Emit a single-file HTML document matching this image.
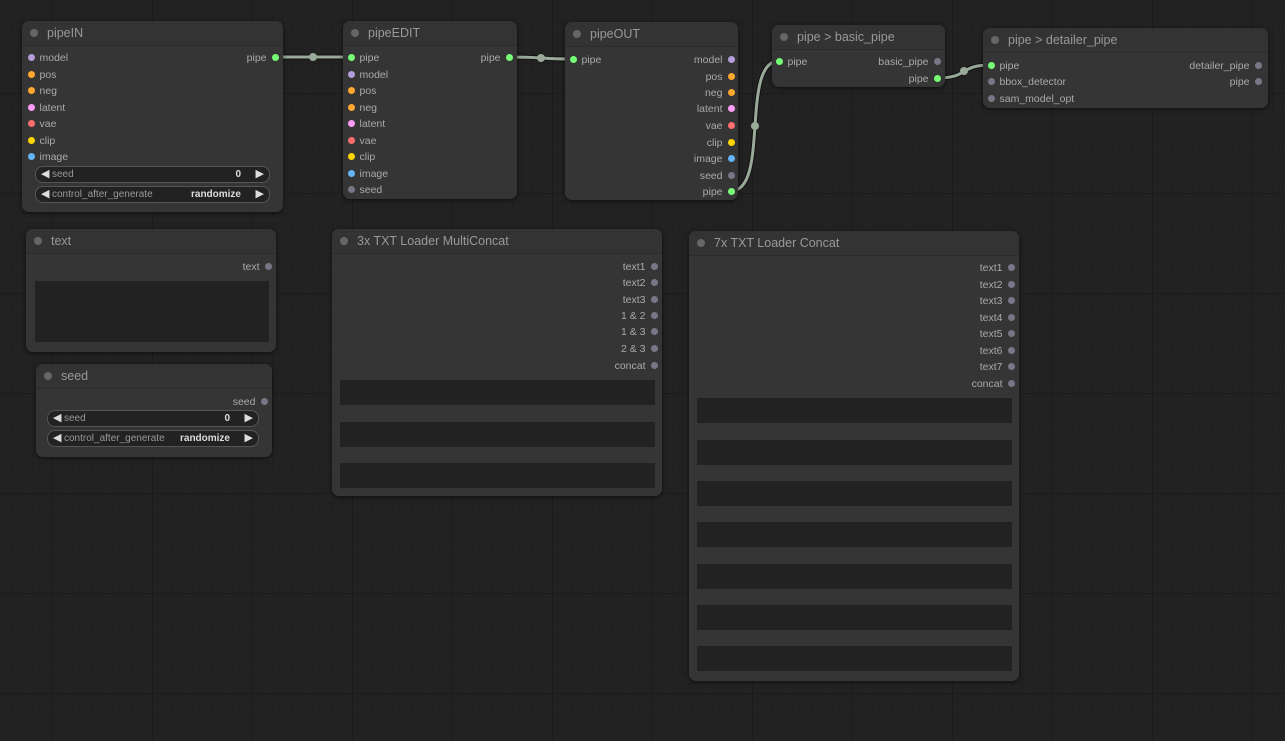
<!DOCTYPE html>
<html><head><style>
body{margin:0;width:1285px;height:741px;overflow:hidden;font-family:"Liberation Sans",sans-serif;
background-color:#222;
background-image:linear-gradient(#1b1b1b 1px,transparent 1px),linear-gradient(90deg,#1b1b1b 1px,transparent 1px),linear-gradient(#1f1f1f 1px,transparent 1px),linear-gradient(90deg,#1f1f1f 1px,transparent 1px);
background-size:100px 100px,100px 100px,10px 10px,10px 10px;background-position:-48px -7px;position:relative}
.n{position:absolute;background:#353535;border-radius:7px;box-shadow:0 1px 4px rgba(0,0,0,.6)}
.n .t{height:24px;border-bottom:1px solid #2c2c2c;background:#333;border-radius:7px 7px 0 0;color:#999;font-size:12.5px;line-height:24px;padding-left:25px;position:relative}
.n .t:before{content:"";position:absolute;left:8px;top:8px;width:8px;height:8px;border-radius:50%;background:#666}
.i,.o{position:absolute;height:14px;line-height:16px;font-size:10.5px;color:#aaa;white-space:nowrap}
.i{padding-left:12px}.o{padding-right:12px;text-align:right}
.i b,.o b{position:absolute;top:3.5px;width:7px;height:7px;border-radius:50%;background:#778}
.i b{left:0}.o b{right:0}
.w{position:absolute;height:15px;border:1px solid #555;border-radius:8px;background:#222;font-size:10px;line-height:16px;color:#999}
.w .l{position:absolute;left:5px;color:#ddd;font-size:11px;line-height:15px}.w .r{position:absolute;right:5px;color:#ddd;font-size:11px;line-height:15px}
.w .k{position:absolute;left:16px}.w .v{position:absolute;right:28px;color:#ddd;font-weight:bold}
.ta{position:absolute;background:#222}
.g{background:#7f7!important}
</style></head><body>
<svg width="1285" height="741" style="position:absolute;left:0;top:0">
<g fill="none" stroke-linecap="round">
<g stroke="#111" stroke-width="5">
<path d="M275 57 C310 57 316 57 351 57"/><path d="M509 57 C545 57 537 59 573 59"/><path d="M731 191 C770 191 740 61 779 61"/><path d="M937 78 C970 78 958 65 991 65"/></g>
<g stroke="#9aaa98" stroke-width="3">
<path d="M275 57 C310 57 316 57 351 57"/><path d="M509 57 C545 57 537 59 573 59"/><path d="M731 191 C770 191 740 61 779 61"/><path d="M937 78 C970 78 958 65 991 65"/></g></g>
<g fill="#9aaa98"><circle cx="313" cy="57" r="4"/><circle cx="541" cy="58" r="4"/><circle cx="755" cy="126" r="4"/><circle cx="964" cy="71" r="4"/></g>
</svg>

<div class="n" style="left:22px;top:21px;width:261px;height:191px"><div class="t">pipeIN</div></div>
<div class="n" style="left:343px;top:21px;width:174px;height:178px"><div class="t">pipeEDIT</div></div>
<div class="n" style="left:565px;top:22px;width:173px;height:178px"><div class="t">pipeOUT</div></div>
<div class="n" style="left:772px;top:25px;width:173px;height:62px"><div class="t">pipe &gt; basic_pipe</div></div>
<div class="n" style="left:983px;top:28px;width:285px;height:80px"><div class="t">pipe &gt; detailer_pipe</div></div>
<div class="n" style="left:26px;top:229px;width:250px;height:123px"><div class="t">text</div></div>
<div class="n" style="left:36px;top:364px;width:236px;height:93px"><div class="t">seed</div></div>
<div class="n" style="left:332px;top:229px;width:330px;height:267px"><div class="t">3x TXT Loader MultiConcat</div></div>
<div class="n" style="left:689px;top:231px;width:330px;height:450px"><div class="t">7x TXT Loader Concat</div></div>

<!-- pipeIN -->
<div class="i" style="left:27.5px;top:50px"><b style="background:#b39ddb"></b>model</div>
<div class="i" style="left:27.5px;top:67px"><b style="background:#ffa931"></b>pos</div>
<div class="i" style="left:27.5px;top:83px"><b style="background:#ffa931"></b>neg</div>
<div class="i" style="left:27.5px;top:100px"><b style="background:#ff9cf9"></b>latent</div>
<div class="i" style="left:27.5px;top:116px"><b style="background:#ff6e6e"></b>vae</div>
<div class="i" style="left:27.5px;top:133px"><b style="background:#ffd500"></b>clip</div>
<div class="i" style="left:27.5px;top:149px"><b style="background:#64b5f6"></b>image</div>
<div class="o" style="right:1006.5px;top:50px"><b class="g"></b>pipe</div>
<div class="w" style="left:35px;top:166px;width:233px"><span class="l">◀</span><span class="k">seed</span><span class="v">0</span><span class="r">▶</span></div>
<div class="w" style="left:35px;top:186px;width:233px"><span class="l">◀</span><span class="k">control_after_generate</span><span class="v">randomize</span><span class="r">▶</span></div>

<!-- pipeEDIT -->
<div class="i" style="left:347.5px;top:50px"><b class="g"></b>pipe</div>
<div class="i" style="left:347.5px;top:67px"><b style="background:#b39ddb"></b>model</div>
<div class="i" style="left:347.5px;top:83px"><b style="background:#ffa931"></b>pos</div>
<div class="i" style="left:347.5px;top:100px"><b style="background:#ffa931"></b>neg</div>
<div class="i" style="left:347.5px;top:116px"><b style="background:#ff9cf9"></b>latent</div>
<div class="i" style="left:347.5px;top:133px"><b style="background:#ff6e6e"></b>vae</div>
<div class="i" style="left:347.5px;top:149px"><b style="background:#ffd500"></b>clip</div>
<div class="i" style="left:347.5px;top:166px"><b style="background:#64b5f6"></b>image</div>
<div class="i" style="left:347.5px;top:182px"><b></b>seed</div>
<div class="o" style="right:772.5px;top:50px"><b class="g"></b>pipe</div>

<!-- pipeOUT -->
<div class="i" style="left:569.5px;top:52px"><b class="g"></b>pipe</div>
<div class="o" style="right:550.5px;top:52px"><b style="background:#b39ddb"></b>model</div>
<div class="o" style="right:550.5px;top:69px"><b style="background:#ffa931"></b>pos</div>
<div class="o" style="right:550.5px;top:85px"><b style="background:#ffa931"></b>neg</div>
<div class="o" style="right:550.5px;top:101px"><b style="background:#ff9cf9"></b>latent</div>
<div class="o" style="right:550.5px;top:118px"><b style="background:#ff6e6e"></b>vae</div>
<div class="o" style="right:550.5px;top:135px"><b style="background:#ffd500"></b>clip</div>
<div class="o" style="right:550.5px;top:151px"><b style="background:#64b5f6"></b>image</div>
<div class="o" style="right:550.5px;top:168px"><b></b>seed</div>
<div class="o" style="right:550.5px;top:184px"><b class="g"></b>pipe</div>

<!-- basic -->
<div class="i" style="left:775.5px;top:54px"><b class="g"></b>pipe</div>
<div class="o" style="right:344.5px;top:54px"><b></b>basic_pipe</div>
<div class="o" style="right:344.5px;top:71px"><b class="g"></b>pipe</div>

<!-- detailer -->
<div class="i" style="left:987.5px;top:58px"><b class="g"></b>pipe</div>
<div class="i" style="left:987.5px;top:74px"><b></b>bbox_detector</div>
<div class="i" style="left:987.5px;top:91px"><b></b>sam_model_opt</div>
<div class="o" style="right:23.5px;top:58px"><b></b>detailer_pipe</div>
<div class="o" style="right:23.5px;top:74px"><b></b>pipe</div>

<!-- text -->
<div class="o" style="right:1013.5px;top:259px"><b></b>text</div>
<div class="ta" style="left:35px;top:281px;width:234px;height:61px"></div>

<!-- seed -->
<div class="o" style="right:1017.5px;top:394px"><b></b>seed</div>
<div class="w" style="left:47px;top:410px;width:210px"><span class="l">◀</span><span class="k">seed</span><span class="v">0</span><span class="r">▶</span></div>
<div class="w" style="left:47px;top:430px;width:210px"><span class="l">◀</span><span class="k">control_after_generate</span><span class="v">randomize</span><span class="r">▶</span></div>

<!-- 3x -->
<div class="o" style="right:627.5px;top:259px"><b></b>text1</div>
<div class="o" style="right:627.5px;top:275px"><b></b>text2</div>
<div class="o" style="right:627.5px;top:292px"><b></b>text3</div>
<div class="o" style="right:627.5px;top:308px"><b></b>1 &amp; 2</div>
<div class="o" style="right:627.5px;top:324px"><b></b>1 &amp; 3</div>
<div class="o" style="right:627.5px;top:341px"><b></b>2 &amp; 3</div>
<div class="o" style="right:627.5px;top:358px"><b></b>concat</div>
<div class="ta" style="left:340px;top:380px;width:315px;height:25px"></div>
<div class="ta" style="left:340px;top:422px;width:315px;height:25px"></div>
<div class="ta" style="left:340px;top:463px;width:315px;height:25px"></div>

<!-- 7x -->
<div class="o" style="right:270.5px;top:260px"><b></b>text1</div>
<div class="o" style="right:270.5px;top:277px"><b></b>text2</div>
<div class="o" style="right:270.5px;top:293px"><b></b>text3</div>
<div class="o" style="right:270.5px;top:310px"><b></b>text4</div>
<div class="o" style="right:270.5px;top:326px"><b></b>text5</div>
<div class="o" style="right:270.5px;top:343px"><b></b>text6</div>
<div class="o" style="right:270.5px;top:359px"><b></b>text7</div>
<div class="o" style="right:270.5px;top:376px"><b></b>concat</div>
<div class="ta" style="left:697px;top:398px;width:315px;height:25px"></div>
<div class="ta" style="left:697px;top:440px;width:315px;height:25px"></div>
<div class="ta" style="left:697px;top:481px;width:315px;height:25px"></div>
<div class="ta" style="left:697px;top:522px;width:315px;height:25px"></div>
<div class="ta" style="left:697px;top:564px;width:315px;height:25px"></div>
<div class="ta" style="left:697px;top:605px;width:315px;height:25px"></div>
<div class="ta" style="left:697px;top:646px;width:315px;height:25px"></div>
</body></html>
